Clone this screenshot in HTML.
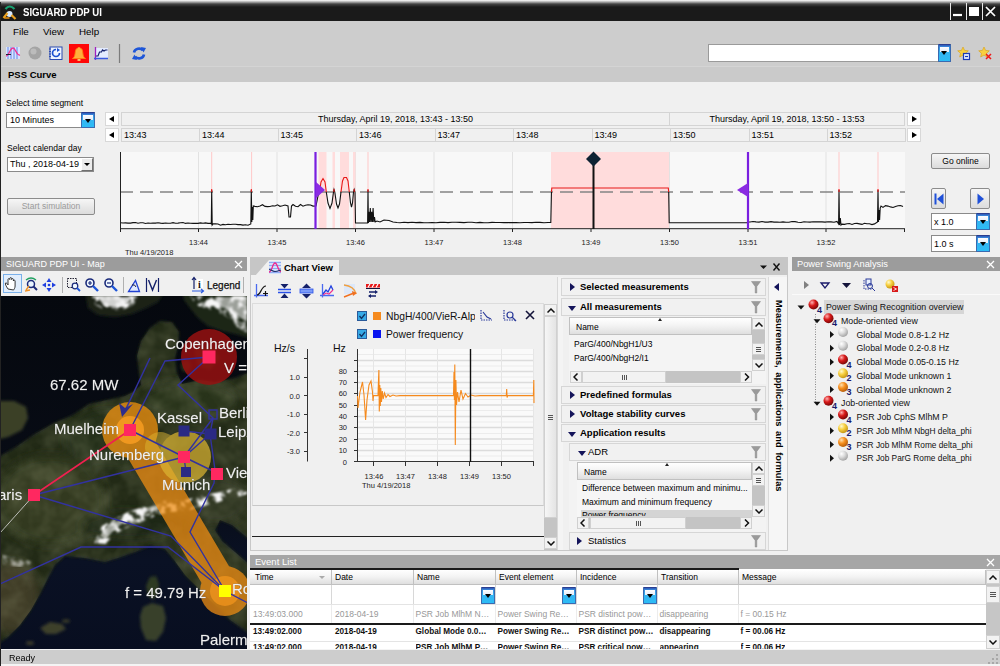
<!DOCTYPE html>
<html><head><meta charset="utf-8">
<style>
*{box-sizing:border-box;margin:0;padding:0}
html,body{width:1000px;height:666px;overflow:hidden;background:#f0f0f0;font-family:"Liberation Sans",sans-serif;font-size:9px;color:#000}
.a{position:absolute}
#titlebar{left:0;top:0;width:1000px;height:21px;background:linear-gradient(#fff 0,#aaa 2px,#444 4px,#1a1a1a 7px,#1a1a1a 100%)}
#title{left:23px;top:5.5px;color:#fff;font-weight:bold;font-size:10.5px;transform:scaleX(0.915);transform-origin:0 0;white-space:nowrap}
#menubar{left:0;top:21px;width:1000px;height:45px;background:#cdcdcd}
.menu{top:26px;font-size:9.8px}
#psshead{left:0;top:66px;width:1000px;height:16px;background:#cacaca;border-top:1px solid #d4d4d4}
#psshead span{position:absolute;left:8px;top:2px;font-weight:bold;font-size:9.5px}
#pss{left:0;top:82px;width:1000px;height:175px;background:#f0f0f0}
.lbl{font-size:8.5px}
.combo{background:#fff;border:1px solid #8a8a8a;font-size:9px}
.ddbtn{background:linear-gradient(#2f55b5 0,#3a8ee0 2px,#35b4f2 45%,#2cbcf6 100%);border:1px solid #3a6ab0;border-top-color:#2a3e90;border-radius:1px}
.ddbtn:before{content:"";position:absolute;left:1px;right:1px;top:2px;height:5px;background:linear-gradient(#fdfdff,#e4ecfa)}
.ddbtn:after{content:"";position:absolute;left:50%;margin-left:-3.5px;top:6px;border:3.5px solid transparent;border-top:4px solid #000;border-bottom:0;width:0;height:0}
.navb{background:#fff;border:1px solid #d8d8d8;width:14px;height:14px}
.bar{background:#f0f0f0;border:1px solid #d4d4d4;height:14px}
.btn{border:1px solid #8c8c8c;border-radius:2px;background:linear-gradient(#f6f6f6,#dcdcdc);font-size:8.5px;text-align:center}
.sep{background:#a0a0a0}
.ptitle{background:#9c9c9c;color:#fff;font-size:9.5px}
.tl,.tr{position:absolute;left:3px;top:3px;width:0;height:0;border:3.5px solid transparent}.tl{border-right:5px solid #000;border-left:0}.tr{border-left:5px solid #000;border-right:0;left:4px}

.tabstrip{background:#c6c6c6}
.acc{background:#f1f1f1;border:1px solid #d6d6d6;font-weight:bold;font-size:9.5px}
.acc span{position:absolute;top:2px}
.tri-r{position:absolute;width:0;height:0;border:4px solid transparent;border-left:5px solid #14145a;border-right:0}
.tri-d{position:absolute;width:0;height:0;border:4px solid transparent;border-top:5px solid #14145a;border-bottom:0}
.fun{position:absolute}
.th{background:linear-gradient(#ffffff,#f4f4f4 45%,#dfdfdf);border:1px solid #c0c0c0;font-size:8.5px}
.sb{background:#c4c4c4}
.sbb{position:absolute;background:#f2f2f2;border:1px solid #d0d0d0}
.row{font-size:8.5px;white-space:nowrap}
.tree{font-size:8.8px;white-space:nowrap;color:#111}
</style></head><body>
<div class="a" id="titlebar"></div>
<div class="a" id="title">SIGUARD PDP UI</div>
<div class="a" id="menubar"></div>
<div class="a menu" style="left:13px">File</div>
<div class="a menu" style="left:43px">View</div>
<div class="a menu" style="left:79px">Help</div>
<div class="a" id="psshead"><span>PSS Curve</span></div>
<div class="a" id="pss"></div>
<div class="a lbl" style="left:6px;top:98px">Select time segment</div>
<div class="a combo" style="left:6px;top:112px;width:89px;height:16px"><span class="a" style="left:3px;top:2px">10 Minutes</span></div>
<div class="a ddbtn" style="left:81px;top:112px;width:14px;height:16px"></div>
<div class="a lbl" style="left:7px;top:143px">Select calendar day</div>
<div class="a combo" style="left:7px;top:157px;width:87px;height:15px"><span class="a" style="left:2px;top:1px">Thu , 2018-04-19</span></div>
<div class="a" style="left:81px;top:158px;width:12px;height:13px;background:#ececec;border:1px solid #fff;border-right-color:#707070;border-bottom-color:#707070"><i class="a" style="left:2px;top:4px;width:0;height:0;border:3px solid transparent;border-top:3px solid #000;border-bottom:0"></i></div>
<div class="a btn" style="left:7px;top:198px;width:88px;height:17px;color:#9a9a9a;line-height:15px">Start simulation</div>


<!-- TOP TOOLBAR -->
<svg class="a" style="left:0;top:0" width="1000" height="66" viewBox="0 0 1000 66">
<g transform="translate(1.5,1)"><circle cx="8" cy="13" r="3" fill="#d8eaff"/><path d="M4 8q4-5 9 0" stroke="#18a070" stroke-width="2.2" fill="none"/><path d="M6 12L2 17M10 14l4 4" stroke="#e8a020" stroke-width="2.2"/><path d="M3 17h5" stroke="#e89010" stroke-width="1.5"/></g>
<g stroke="#fff" fill="none"><path d="M950.5 3V20M966.5 3V20M982.5 3V20" stroke="#e8e8e8" stroke-width="1"/><path d="M953 15h9" stroke-width="2.2"/><rect x="969.5" y="7.5" width="9" height="8" fill="#fff"/><path d="M986 7l9 9M995 7l-9 9" stroke-width="1.7"/></g>
<g><rect x="6" y="47" width="14" height="12" fill="#d6e4ff"/><path d="M8 47v12M11 47v12M14 47v12M17 47v12" stroke="#5a7ce8" stroke-width="0.9"/><path d="M6 56c3 0 4-8 7-8s3 8 7 7" stroke="#f03090" stroke-width="1.3" fill="none"/><path d="M6 54.5h5" stroke="#223" stroke-width="1"/></g>
<circle cx="35" cy="53" r="6.5" fill="#a4a4a4"/><circle cx="33.5" cy="51.5" r="3" fill="#bcbcbc"/>
<g><rect x="50" y="47" width="12" height="12.5" fill="#eef4ff" stroke="#2a4ab0" stroke-width="1"/><path d="M49 49h2M49 51.5h2M49 54h2M49 56.5h2" stroke="#2a4ab0" stroke-width="1"/><path d="M59.5 53a3.5 3.5 0 1 1-3.5-3.5" stroke="#1a50d0" stroke-width="1.7" fill="none"/><path d="M57 48l3 2l-3 2Z" fill="#1a50d0"/></g>
<rect x="69" y="44" width="20" height="19" fill="#ff0808"/><path d="M72.5 58.5C76 57 74.5 50.5 76.5 48.8C77.8 47.6 80.2 47.6 81.5 48.8C83.5 50.5 82 57 85.5 58.5Z" fill="#ffae3c" stroke="#ff8210" stroke-width="0.9"/><circle cx="79" cy="48.5" r="1.2" fill="#ffb040"/><ellipse cx="79" cy="60" rx="1.8" ry="1" fill="#ffc870"/>
<g><rect x="96" y="48" width="12" height="10" fill="#e4ecff"/><path d="M95.5 47v13" stroke="#a020c0" stroke-width="1.3"/><path d="M94 58.5h14" stroke="#3a5ae0" stroke-width="1.5"/><path d="M96 56h2l1.5-4h2l1-2l1.5 1l1.5-1h2" stroke="#14206a" stroke-width="1.2" fill="none"/></g>
<path d="M119.5 44v19" stroke="#7c7c7c" stroke-width="1.2"/>
<g fill="none" stroke="#1e56d8" stroke-width="2.6"><path d="M134 52.5a5 4.5 0 0 1 9-2"/><path d="M144 54.5a5 4.5 0 0 1-9 2"/></g><path d="M141 47l5 1l-2.5 4.5Z" fill="#1e56d8"/><path d="M137 60l-5-1l2.5-4.5Z" fill="#1e56d8"/>
<g><path d="M963 47l1.6 3.4l3.7 0.4l-2.8 2.5l0.8 3.7l-3.3-1.9l-3.3 1.9l0.8-3.7l-2.8-2.5l3.7-0.4Z" fill="#f8d040" stroke="#d8a010" stroke-width="0.6"/><rect x="963.5" y="53.5" width="6" height="6" fill="#e8f0ff" stroke="#1a3ab8" stroke-width="1.2"/><path d="M965 56.5h3" stroke="#1a3ab8" stroke-width="1.2"/></g>
<g><path d="M984 47l1.6 3.4l3.7 0.4l-2.8 2.5l0.8 3.7l-3.3-1.9l-3.3 1.9l0.8-3.7l-2.8-2.5l3.7-0.4Z" fill="#f8d040" stroke="#d8a010" stroke-width="0.6"/><path d="M986 54l5 5M991 54l-5 5" stroke="#f01818" stroke-width="1.5"/></g>
</svg>
<div class="a combo" style="left:708px;top:44px;width:243px;height:18px;border-color:#9a9a9a"></div>
<div class="a ddbtn" style="left:938px;top:44px;width:13px;height:18px"></div>
<!-- PSS timeline -->
<div class="a navb" style="left:105px;top:112px"><i class="tl"></i></div>
<div class="a navb" style="left:105px;top:128px"><i class="tl"></i></div>
<div class="a navb" style="left:907px;top:112px"><i class="tr"></i></div>
<div class="a navb" style="left:907px;top:128px"><i class="tr"></i></div>
<div class="a bar" style="left:121px;top:112px;width:549px;text-align:center;line-height:12px;font-size:9px;padding-left:0">Thursday, April 19, 2018, 13:43 - 13:50</div>
<div class="a bar" style="left:669px;top:112px;width:236px;text-align:center;line-height:12px;font-size:9px">Thursday, April 19, 2018, 13:50 - 13:53</div>
<div class="a bar" style="left:121px;top:128px;width:79px;line-height:12px;font-size:9px;padding-left:2px">13:43</div>
<div class="a bar" style="left:199px;top:128px;width:79.5px;line-height:12px;font-size:9px;padding-left:2px">13:44</div>
<div class="a bar" style="left:277.5px;top:128px;width:79.5px;line-height:12px;font-size:9px;padding-left:2px">13:45</div>
<div class="a bar" style="left:356px;top:128px;width:79.5px;line-height:12px;font-size:9px;padding-left:2px">13:46</div>
<div class="a bar" style="left:434.5px;top:128px;width:79.5px;line-height:12px;font-size:9px;padding-left:2px">13:47</div>
<div class="a bar" style="left:513px;top:128px;width:79.5px;line-height:12px;font-size:9px;padding-left:2px">13:48</div>
<div class="a bar" style="left:591.5px;top:128px;width:79.5px;line-height:12px;font-size:9px;padding-left:2px">13:49</div>
<div class="a bar" style="left:670px;top:128px;width:79.5px;line-height:12px;font-size:9px;padding-left:2px">13:50</div>
<div class="a bar" style="left:748.5px;top:128px;width:79px;line-height:12px;font-size:9px;padding-left:2px">13:51</div>
<div class="a bar" style="left:826.5px;top:128px;width:79.5px;line-height:12px;font-size:9px;padding-left:2px">13:52</div>
<svg class="a" style="left:100px;top:145px" width="820" height="115" viewBox="100 145 820 115" font-family="Liberation Sans, sans-serif">
<rect x="120" y="152" width="785" height="77" fill="#f8f8f8"/>
<g stroke="#e2e2e2" stroke-width="1"><path d="M198.5 152V229M277 152V229M355.5 152V229M434 152V229M512.5 152V229M591 152V229M669.5 152V229M748 152V229M826 152V229"/></g>
<g fill="#ffdcdc"><rect x="318.5" y="152" width="8" height="77"/><rect x="332.5" y="152" width="2.5" height="77"/><rect x="340" y="152" width="9" height="77"/><rect x="353" y="152" width="2.5" height="77"/><rect x="551" y="152" width="118" height="77"/></g>
<g stroke="#ffc8c8" stroke-width="1"><path d="M211.7 152V192M251.6 152V192M368 152V192M839 152V192M878 152V192"/></g>
<path d="M120 192H905" stroke="#848484" stroke-width="1.3" stroke-dasharray="13 7" fill="none"/>
<path id="sig" d="M120.5 222.7L123.0 223.0L125.5 222.9L128.0 223.1L130.5 223.1L133.0 222.6L135.5 222.5L138.0 223.3L140.5 222.8L143.0 222.7L145.5 223.5L148.0 223.0L150.5 223.3L153.0 223.0L155.5 223.1L158.0 222.7L160.5 223.1L163.0 223.4L165.5 223.0L168.0 223.2L170.5 223.2L173.0 222.6L175.5 223.3L178.0 223.1L180.5 222.8L183.0 222.5L185.5 223.4L188.0 223.0L190.5 223.2L193.0 223.4L195.5 223.2L198.0 223.4L200.5 222.9L203.0 223.3L205.5 222.9L208.0 223.4L210.5 223.4L211.3 224.0L211.7 190.0L212.2 225.0L213.0 223.9L215.5 223.9L218.0 224.0L220.5 225.2L223.0 224.4L225.5 224.7L228.0 224.2L230.5 224.5L233.0 224.3L235.5 224.3L238.0 224.6L240.5 224.6L243.0 225.1L245.5 224.8L248.0 225.2L250.8 224.0L251.3 190.0L251.8 222.0L252.3 207.0L252.8 220.0L253.3 206.0L255.0 206.4L257.5 206.7L260.0 205.9L262.5 204.7L265.0 206.4L267.5 206.6L270.0 206.5L272.5 205.7L275.0 206.0L277.5 204.8L280.0 206.3L282.5 205.7L285.0 205.0L288.0 206.0L289.0 217.0L290.5 217.0L291.5 206.0L293.0 204.5L295.5 206.3L298.0 206.7L300.5 204.5L303.0 206.2L305.5 205.3L308.0 204.7L310.5 205.0L313.0 206.1L316.0 206.0L318.0 196.0L319.5 192.0 M326.3 192.0L328.0 203.0L330.0 208.5L332.0 203.0L333.5 192.0L334.0 189.5L334.8 192.0L336.5 204.0L338.0 208.0L339.5 204.0L341.0 192.0 M349.3 192.0L350.5 203.0L351.5 207.0L352.5 203.0L353.5 192.0L354.2 189.5L355.0 192.0L355.5 223.0L367.6 223.0L368.0 190.0L368.4 223.0L368.9 211.8L369.6 222.0L370.3 208.0L371.0 222.0L371.7 211.8L372.4 222.0L373.1 208.0L373.8 222.0L374.5 217.0L375.2 222.0L377.0 221.0L380.0 222.0L384.0 220.0L389.0 220.5L393.0 222.0L397.0 222.5L400.0 222.7L404.0 222.2L408.0 222.6L412.0 222.2L416.0 222.6L420.0 222.4L424.0 222.7L428.0 222.8L432.0 222.5L436.0 222.8L440.0 222.4L444.0 222.2L448.0 222.6L452.0 222.2L456.0 222.3L460.0 222.4L464.0 222.6L468.0 222.3L472.0 222.2L476.0 222.7L480.0 222.4L484.0 222.8L488.0 222.7L492.0 222.4L496.0 222.5L500.0 222.5L504.0 222.6L508.0 222.6L512.0 222.5L516.0 222.6L520.0 222.8L524.0 222.5L528.0 222.5L532.0 222.6L536.0 222.3L540.0 222.4L544.0 222.8L548.0 222.5L550.8 222.5L551.5 190.0 M668.7 192.0L669.2 222.8L747.0 222.8L748.5 222.0L750.0 222.0L753.0 221.5L756.0 221.9L759.0 222.1L762.0 221.5L765.0 222.1L768.0 222.1L771.0 221.6L774.0 222.1L777.0 222.0L780.0 222.2L783.0 221.9L786.0 222.2L789.0 222.2L792.0 221.5L795.0 221.6L798.0 222.2L801.0 222.5L804.0 221.8L807.0 222.0L810.0 222.1L813.0 221.8L816.0 221.9L819.0 221.8L822.0 221.9L825.0 222.1L828.0 221.8L831.0 221.9L834.0 222.3L837.0 221.5L838.6 224.0L839.0 190.0L839.5 225.0L840.3 218.0L841.0 225.0L842.0 224.1L844.5 224.4L847.0 223.7L849.5 223.5L852.0 224.5L854.5 223.5L857.0 223.4L859.5 223.9L862.0 224.4L864.5 223.3L867.0 223.7L869.5 223.7L872.0 224.6L874.5 223.9L877.5 222.0L878.0 190.0L878.5 222.0L879.0 210.0L879.6 220.0L880.2 208.0L881.0 206.0L883.0 207.4L885.5 205.6L888.0 206.1L890.5 206.9L893.0 207.5L895.5 206.4L898.0 205.8L900.5 205.5L903.0 206.6" stroke="#111" stroke-width="1.1" fill="none"/>
<path id="sigr" d="M319.5 192.0L321.0 182.0L323.0 178.5L325.0 182.0L326.3 192.0 M341.0 192.0L342.5 181.0L344.0 177.5L346.5 177.5L348.0 181.0L349.3 192.0 M551.5 192.0L551.8 188.0L668.3 188.0L668.7 192.0 M211.7 192V189 M251.3 192V189 M334.0 192V189 M354.2 192V189 M368.0 192V189 M839.0 192V189 M878.0 192V189" stroke="#e81818" stroke-width="1.1" fill="none"/>
<path d="M120.5 152V232M120 228.7H905M198.5 229v3M277 229v3M355.5 229v3M434 229v3M512.5 229v3M591 229v3M669.5 229v3M748 229v3M826 229v3M904.5 229v3" stroke="#222" stroke-width="1" fill="none"/>
<path d="M315.5 152V229" stroke="#7a1fe0" stroke-width="2.2"/><path d="M316 182L325 190L316 198Z" fill="#8a2be2"/>
<path d="M748 152V229" stroke="#7a1fe0" stroke-width="2.2"/><path d="M748 183L737 190L748 197Z" fill="#8a2be2"/>
<path d="M593.5 158V229" stroke="#111" stroke-width="2"/><path d="M593.5 151.5L601 159L593.5 166.5L586 159Z" fill="#0e2233"/>
<g font-size="7.5" fill="#222" text-anchor="middle"><text x="198.5" y="245">13:44</text><text x="277" y="245">13:45</text><text x="355.5" y="245">13:46</text><text x="434" y="245">13:47</text><text x="512.5" y="245">13:48</text><text x="591" y="245">13:49</text><text x="669.5" y="245">13:50</text><text x="748" y="245">13:51</text><text x="826" y="245">13:52</text></g>
<text x="125" y="255" font-size="7.5" fill="#222">Thu 4/19/2018</text>
</svg>
<div class="a btn" style="left:931px;top:153px;width:59px;height:16px;line-height:14px">Go online</div>
<div class="a btn" style="left:931px;top:188px;width:15px;height:21px"><svg class="a" style="left:2px;top:4px" width="10" height="12"><path d="M1.5 0.5V11.5" stroke="#1f50d8" stroke-width="2"/><path d="M9.5 0.5L3 6L9.5 11.5Z" fill="#1f50d8"/></svg></div>
<div class="a btn" style="left:970px;top:188px;width:20px;height:21px"><svg class="a" style="left:6px;top:4px" width="8" height="12"><path d="M0.5 0.5L7 6L0.5 11.5Z" fill="#1f50d8"/></svg></div>
<div class="a combo" style="left:931px;top:213px;width:59px;height:17px"><span class="a" style="left:2px;top:3px">x 1.0</span></div>
<div class="a ddbtn" style="left:976px;top:213px;width:14px;height:17px"></div>
<div class="a combo" style="left:931px;top:235px;width:59px;height:17px"><span class="a" style="left:2px;top:3px">1.0 s</span></div>
<div class="a ddbtn" style="left:976px;top:235px;width:14px;height:17px"></div>


<!-- MAP PANEL -->
<div class="a ptitle" style="left:1px;top:257px;width:246px;height:14px"><span class="a" style="left:5px;top:2px;font-size:9px;white-space:nowrap">SIGUARD PDP UI - Map</span><svg class="a" style="left:233px;top:3px" width="9" height="9"><path d="M1 1L8 8M8 1L1 8" stroke="#fff" stroke-width="1.3" fill="none"/></svg></div>
<div class="a" style="left:0;top:271px;width:247px;height:25px;background:#f0f0f0"></div>
<svg class="a" style="left:0;top:272px" width="247" height="24" viewBox="0 272 247 24" font-family="Liberation Sans, sans-serif">
<rect x="3.5" y="274.5" width="18" height="18" fill="#e2eefc" stroke="#7ab0ea"/>
<path d="M8 289c-2-3-3-5-2.5-6c1-0.5 2 1 2.5 2v-5.500c0-1.2 1.8-1.2 1.8 0v-1c0-1.2 1.8-1.2 1.8 0v1c0-1.2 1.8-1.2 1.8 0v1.500c0-1.2 1.7-1.2 1.7 0v5c0 2-1 3-1.5 4Z" fill="#fff" stroke="#222" stroke-width="0.9"/>
<g><circle cx="31" cy="284" r="3.5" fill="#e8f4ff" stroke="#1a2a7a" stroke-width="1.5"/><path d="M33.5 286.500l3.5 3.5" stroke="#1a2a7a" stroke-width="2"/><path d="M26 280q5-4 10 0" stroke="#20a060" stroke-width="1.3" fill="none"/><path d="M26 290l3-4M25 291l5-1" stroke="#f09020" stroke-width="1.3"/></g>
<g fill="#2040e0"><path d="M49 278l2.5 4h-5ZM49 292l2.5-4h-5ZM42 285l4-2.500v5ZM56 285l-4-2.500v5Z"/><circle cx="49" cy="285" r="1.3"/></g>
<path d="M62.5 277v16M123.5 277v16M243.5 277v16" stroke="#b0b0b0" stroke-width="1"/>
<g><rect x="67.5" y="278.5" width="9" height="9" fill="none" stroke="#223" stroke-width="1" stroke-dasharray="1.5 1"/><circle cx="75" cy="286" r="2.8" fill="#f0f8ff" stroke="#1a2a7a" stroke-width="1.2"/><path d="M77 288l3 3" stroke="#1e56d8" stroke-width="1.8"/></g>
<g><circle cx="90" cy="283" r="4" fill="#f0f8ff" stroke="#1a2a7a" stroke-width="1.6"/><path d="M88 283h4M90 281v4" stroke="#1a2a7a" stroke-width="1.2"/><path d="M93 286l5 5" stroke="#1e56d8" stroke-width="2.4"/></g>
<g><circle cx="109" cy="283" r="4" fill="#f0f8ff" stroke="#1a2a7a" stroke-width="1.6"/><path d="M107 283h4" stroke="#1a2a7a" stroke-width="1.2"/><path d="M112 286l5 5" stroke="#1e56d8" stroke-width="2.4"/></g>
<path d="M128.5 291.500h11l-4-11Z" fill="#dfe8ff" stroke="#2040d0" stroke-width="1.3"/><path d="M132 285q3-1 4 2" stroke="#223" stroke-width="1" fill="none"/>
<path d="M146.5 278v14M158.5 278v14" stroke="#14206a" stroke-width="1.2"/><path d="M148.5 280l4 10l4-10" stroke="#14206a" stroke-width="1.4" fill="none"/>
<g><path d="M194 278v11M192 280l2-2.500l2 2.5" stroke="#14206a" stroke-width="1.2" fill="none"/><path d="M192 291h11M201 289l2.5 2l-2.5 2" stroke="#2a5ae0" stroke-width="1.2" fill="none"/><rect x="197" y="279" width="6" height="9" fill="#fff"/><text x="198" y="288" font-size="10" font-weight="bold" fill="#111" font-family="Liberation Serif, serif">i</text></g>
<text x="207" y="289" font-size="10" fill="#111" stroke="#111" stroke-width="0.250">Legend</text>
</svg>
<svg class="a" style="left:1px;top:296px" width="246" height="353" viewBox="1 296 246 353" font-family="Liberation Sans, sans-serif">
<defs>
<filter id="b2" x="-20%" y="-20%" width="140%" height="140%"><feGaussianBlur stdDeviation="1.6"/></filter>
<filter id="b4" x="-30%" y="-30%" width="160%" height="160%"><feGaussianBlur stdDeviation="5"/></filter>
<filter id="b1" x="-20%" y="-20%" width="140%" height="140%"><feGaussianBlur stdDeviation="0.9"/></filter>
<filter id="tex" x="0" y="0" width="100%" height="100%"><feTurbulence type="fractalNoise" baseFrequency="0.045" numOctaves="3" seed="11"/><feColorMatrix values="0 0 0 0 0.42  0 0 0 0 0.44  0 0 0 0 0.26  1.5 0 0 0 -0.45"/></filter>
<filter id="snow" x="0" y="0" width="100%" height="100%"><feTurbulence type="fractalNoise" baseFrequency="0.13" numOctaves="2" seed="5" result="n"/><feColorMatrix in="n" values="0 0 0 0 0.93  0 0 0 0 0.93  0 0 0 0 0.93  0 0 0 5 -2.1" result="m"/><feComposite in="m" in2="SourceGraphic" operator="in"/><feGaussianBlur stdDeviation="0.8"/></filter>
<linearGradient id="sea" x1="0" y1="0" x2="0" y2="1"><stop offset="0" stop-color="#05080e"/><stop offset="0.55" stop-color="#080c16"/><stop offset="0.75" stop-color="#0a1124"/><stop offset="1" stop-color="#080e20"/></linearGradient>
<clipPath id="landclip"><path d="M160 321L150 328L141 341L137 356L139 372L141 385L133 392L125 396L89 404L73 415L54 423L35 434L16 447L-5 459L-5 646L8 637L20 625L31 610L40 594L48 578L55 565L65 556L85 558L105 562L118 558L135 552L150 546L165 549L174 560L185 575L200 590L215 605L230 620L250 634L250 565L235 552L222 541L215 530L220 520L232 525L250 540L250 372L235 378L215 382L200 380L182 384L177 373L175 358L178 345L179 332L172 322Z"/></clipPath>
</defs>
<rect x="1" y="296" width="246" height="353" fill="url(#sea)"/>
<g filter="url(#b2)">
<path d="M160 321L150 328L141 341L137 356L139 372L141 385L133 392L125 396L89 404L73 415L54 423L35 434L16 447L-5 459L-5 646L8 637L20 625L31 610L40 594L48 578L55 565L65 556L85 558L105 562L118 558L135 552L150 546L165 549L174 560L185 575L200 590L215 605L230 620L250 634L250 565L235 552L222 541L215 530L220 520L232 525L250 540L250 372L235 378L215 382L200 380L182 384L177 373L175 358L178 345L179 332L172 322Z" fill="#222c17"/>
<path d="M182 290L250 290L250 338L235 334L222 331L208 326L198 318L190 308L184 300Z" fill="#1e2617"/>
<path d="M85 290L166 290L158 302L146 308L132 314L115 317L98 315L88 308Z" fill="#1b2216"/>
<path d="M-5 401L14 401L26 407L28 418L22 430L8 437L-5 440Z" fill="#3a4127"/>
<path d="M194 350L212 346L220 358L210 370L198 366Z" fill="#263019"/><ellipse cx="186" cy="366" rx="5" ry="6" fill="#263019"/>
<path d="M150 577L156 576L159 584L158 594L153 600L148 596L146 586Z" fill="#2f3a20"/><path d="M143 607L152 603L163 606L166 618L163 632L156 641L146 640L141 628L140 616Z" fill="#38412a"/>
<path d="M40 628L50 622L62 624L66 629L56 634L46 634Z" fill="#3c3f2a"/><ellipse cx="66" cy="621" rx="4" ry="1.8" fill="#3a3d28"/><ellipse cx="30" cy="643" rx="4" ry="2" fill="#3a3a2a"/>
</g>
<g clip-path="url(#landclip)">
<g filter="url(#b4)" opacity="0.85">
<ellipse cx="50" cy="500" rx="55" ry="45" fill="#363c20"/>
<ellipse cx="12" cy="598" rx="28" ry="36" fill="#453f29"/>
<ellipse cx="130" cy="525" rx="50" ry="14" fill="#1d2817"/>
<ellipse cx="190" cy="400" rx="50" ry="20" fill="#2a351c"/>
<ellipse cx="110" cy="440" rx="45" ry="30" fill="#26321a"/>
<ellipse cx="215" cy="500" rx="35" ry="25" fill="#2e3520"/>
<ellipse cx="200" cy="575" rx="25" ry="30" fill="#333722"/>
</g>
<rect x="1" y="296" width="246" height="353" filter="url(#tex)" opacity="0.28"/>
</g>
<g filter="url(#snow)" fill="#fff">
<path d="M92 296L138 296L134 305L120 311L104 310L95 305Z"/><path d="M190 296L247 296L247 333L238 328L231 320L222 314L206 310L195 304Z"/>
<path d="M94 543L102 526L116 518L128 512L140 508L153 503L168 500L185 500L200 496L215 493L232 489L247 486L247 494L230 499L215 503L200 507L186 511L170 512L158 515L146 520L136 524L124 529L114 535L106 544Z"/>
<path d="M2 555L20 558L38 563L20 567L2 564Z" opacity="0.5"/>
</g>
<g filter="url(#b1)" fill="#f0f0f0">
<path d="M98 297L132 297L128 303L116 307L104 306Z" opacity="0.85"/><path d="M215 297L247 297L247 322L238 316L228 310L218 304Z" opacity="0.6"/>
<path d="M100 536L108 525L120 520L130 515L124 522L114 530L106 539Z" opacity="0.6"/><path d="M138 511l14-5l12-3l-8 6l-12 4Z" opacity="0.5"/>
</g>
<!-- overlays -->
<circle cx="209" cy="357" r="28" fill="#961010" opacity="0.85"/>
<g opacity="0.74"><path d="M130 430L225 591" stroke="#f08e14" stroke-width="32" stroke-linecap="butt"/><circle cx="130" cy="430" r="28" fill="#f4940f"/><circle cx="225" cy="591" r="25" fill="#f08e14"/></g>
<g opacity="0.72"><circle cx="185" cy="457" r="26" fill="#dcb432"/><path d="M160 447L185 457" stroke="#dcb432" stroke-width="30" stroke-linecap="round" opacity="0.7"/></g>
<circle cx="130" cy="430" r="14" fill="#ffa224" opacity="0.75"/><circle cx="225" cy="591" r="15" fill="#ff9c20" opacity="0.6"/>
<g stroke="#3232a0" stroke-width="1.4" fill="none">
<path d="M209 357L165 361L130 430"/><path d="M209 357L178 385L213 418L210 434L215 470L214 483L190 532L225 591"/>
<path d="M130 430L184 457L217 473"/><path d="M34 495L184 457"/><path d="M34 495L171 536L225 591"/><path d="M0 584L81 547L168 547L225 591L250 604"/>
<path d="M184 457L210 434L184 431"/><path d="M184 457L186 472"/><path d="M184 457L213 418"/>
<rect x="209" y="410" width="8" height="9"/>
<path d="M150 358L124 413" stroke-width="1.5"/>
</g>
<path d="M122 417L119 403L125 408L133 404Z" fill="#2e2e8c"/>
<path d="M34 495L130 430" stroke="#f02050" stroke-width="1.6"/><path d="M34 495L0 533" stroke="#ddd" stroke-width="0.8"/>
<g fill="#ff2860"><rect x="202.5" y="350.5" width="13" height="13"/><rect x="124" y="424" width="12" height="12"/><rect x="178" y="451" width="12" height="12"/><rect x="211" y="468" width="12" height="12"/><rect x="28" y="489" width="12" height="12"/></g>
<g fill="#2a2a84"><rect x="178.5" y="425.5" width="11" height="11"/><rect x="204.5" y="428.5" width="12" height="11"/><rect x="181" y="467" width="10" height="10"/></g>
<rect x="219" y="585" width="12" height="12" fill="#ffff00"/>
<g fill="#f0f0f0" font-size="15" stroke="#888" stroke-width="0.3" paint-order="stroke">
<text x="165" y="348.5">Copenhagen</text><text x="224" y="373">V =</text><text x="50" y="390">67.62 MW</text><text x="54" y="433.5">Muelheim</text><text x="157" y="423">Kassel</text><text x="219" y="417.5">Berlin</text><text x="218" y="437">Leipzig</text><text x="89" y="459.5">Nuremberg</text><text x="162" y="490">Munich</text><text x="226" y="477.5">Vienna</text><text x="-12" y="499.5">Paris</text><text x="125" y="597.5">f = 49.79 Hz</text><text x="232" y="593.5">Rome</text><text x="200" y="645">Palermo</text>
</g>
</svg>
<div class="a" style="left:0;top:2px;width:1px;height:664px;background:#222"></div>


<!-- CHART PANEL -->
<div class="a tabstrip" style="left:250px;top:257px;width:538px;height:18px"></div>
<div class="a" style="left:250px;top:275px;width:538px;height:276px;background:#f0f0f0;border:1px solid #c8c8c8;border-top:0"></div>
<div class="a" style="left:255px;top:260px;width:84px;height:16px;background:#f0f0f0;clip-path:polygon(0 100%,14px 0,100% 0,100% 100%)"></div>
<svg class="a" style="left:268px;top:260px" width="14" height="15" viewBox="0 0 14 15"><rect x="1" y="1" width="12" height="13" fill="#d4e2fc"/><path d="M1 2.5h12M1 5.5h12M1 8.5h12M1 12.5h12" stroke="#7c9cf0" stroke-width="0.8"/><path d="M1 12c3 0 3.5-9 6-9s3 8.5 6 8.5" stroke="#f0288c" stroke-width="1.3" fill="none"/><path d="M1 9.5c2 0 3 2 6 2s4-1 6-1.5" stroke="#1a2a6a" stroke-width="1.1" fill="none"/></svg>
<div class="a" style="left:284px;top:262px;font-weight:bold;font-size:9.5px">Chart View</div>
<svg class="a" style="left:758px;top:262px" width="26" height="10"><path d="M2 3.5H9L5.5 7Z" fill="#111"/><path d="M15.5 1.5L21.5 8.5M21.5 1.5L15.5 8.5" stroke="#111" stroke-width="1.4" fill="none"/></svg>

<svg class="a" style="left:252px;top:280px" width="140" height="22" viewBox="252 280 140 22">
<g><path d="M256.5 284v13.500M254 295.500h14" stroke="#4a6af0" stroke-width="1.3" fill="none"/><path d="M257 295c4 0 4-9 9-9" stroke="#111" stroke-width="1.2" fill="none"/><path d="M263 293.500h5M265.5 291v5" stroke="#111" stroke-width="1.2"/></g>
<g><path d="M278 289.500h13M278 292.500h13" stroke="#2a50e8" stroke-width="1.3"/><path d="M280.5 284h8l-4 4.500ZM280.5 298h8l-4-4.500Z" fill="#14206a"/></g>
<g><rect x="300" y="289" width="13" height="4" fill="#7a9af8" stroke="#2a50e8" stroke-width="0.8"/><path d="M302 288h9l-4.5-4.500ZM302 294h9l-4.5 4.500Z" fill="#14206a"/></g>
<g><path d="M322.5 284v13.500M320 295.500h14" stroke="#4a6af0" stroke-width="1.3" fill="none"/><path d="M323 294l3-4l2 2l3-6l2 4" stroke="#2040e0" stroke-width="1.3" fill="none"/><path d="M323 295l3-2l3 1l4-4" stroke="#f03090" stroke-width="1.1" fill="none"/></g>
<g><rect x="344" y="284" width="11" height="10" fill="#dce8fa"/><path d="M344 285q10 1 12 9" stroke="#f0a040" stroke-width="1.4" fill="none"/><path d="M344 297l10-4" stroke="#f07020" stroke-width="1.5"/><path d="M352 291l5 2l-4 3Z" fill="#f07020"/></g>
<g><rect x="366" y="284" width="14" height="3.5" fill="#e81818"/><path d="M368 287.500l2-3.500M372 287.500l2-3.500M376 287.500l2-3.5" stroke="#fff" stroke-width="1.2"/><path d="M366 288.500h14" stroke="#14143a" stroke-width="1"/><path d="M369 292h7M369 296h7" stroke="#14206a" stroke-width="1.3"/><path d="M375 290l3 2l-3 2ZM371 294l-3 2l3 2Z" fill="#14206a"/></g>
</svg>
<div class="a" style="left:252px;top:303px;width:292px;height:203px;border:1px solid #dcdcdc;border-bottom:1px solid #c8c8c8;background:#f0f0f0"></div>
<div class="a" style="left:252px;top:536px;width:292px;height:1px;background:#222"></div>
<div class="a sb" style="left:544px;top:304px;width:13px;height:246px"></div>
<div class="a sbb" style="left:544px;top:304px;width:13px;height:12px"><svg class="a" style="left:2px;top:3px" width="8" height="5"><path d="M0.5 4.5L4 1L7.5 4.5" stroke="#111" stroke-width="1.5" fill="none"/></svg></div>
<div class="a sbb" style="left:544px;top:316px;width:13px;height:202px;background:linear-gradient(90deg,#f6f6f6,#e4e4e4)"><i class="a" style="left:3px;top:98px;width:5px;height:5px;background:repeating-linear-gradient(#555 0,#555 1px,transparent 1px,transparent 2px)"></i></div>
<div class="a sbb" style="left:544px;top:537px;width:13px;height:12px"><svg class="a" style="left:2px;top:3px" width="8" height="5"><path d="M0.5 0.5L4 4L7.5 0.5" stroke="#111" stroke-width="1.5" fill="none"/></svg></div>
<div class="a" style="left:557px;top:277px;width:6px;height:273px;background:#f4f4f4;border-left:1px solid #d8d8d8"></div>
<svg class="a" style="left:252px;top:304px" width="292" height="200" viewBox="252 304 292 200" font-family="Liberation Sans, sans-serif">
<rect x="357" y="349" width="177" height="113" fill="#fafafa"/>
<g><path d="M357 354.5H534M357 366H534M357 377H534M357 388H534M357 399.5H534M357 410.5H534M357 422H534M357 433.5H534M357 444.5H534M357 456H534" stroke="#ececec" stroke-width="1"/><path d="M357 360.5H534M357 371.5H534M357 382.5H534M357 393.5H534M357 405H534M357 416.5H534M357 427.5H534M357 439H534M357 450.5H534" stroke="#dcdcdc" stroke-width="1.6"/><path d="M373.5 349V462M405.5 349V462M437.5 349V462M501.5 349V462M533.5 349V462" stroke="#e6e6e6" stroke-width="1"/></g>
<path d="M307.5 349V461.5M304 358.5h3M304 377.5h3M304 395.5h3M304 414.5h3M304 432.5h3M304 451.5h3M357.5 349V462M354 360.5h3M354 371.5h3M354 382.5h3M354 393.5h3M354 405.5h3M354 416.5h3M354 427.5h3M354 439.5h3M354 450.5h3M354 461.5H534M373.5 462v4M405.5 462v4M437.5 462v4M469.5 462v4M501.5 462v4M533.5 462v4" stroke="#333" stroke-width="1" fill="none"/>
<path id="osig" d="M357.5 396.0L358.0 408.0L360.0 392.0L362.5 382.0L364.0 395.0L365.6 420.0L367.0 400.0L369.0 385.0L371.0 381.0L372.5 392.0L373.0 401.0L373.5 395.6L378.0 395.6L378.5 380.0L378.9 370.0L379.3 411.6L379.8 385.0L380.3 406.0L380.8 388.0L381.5 402.0L382.3 391.0L383.2 399.0L384.5 393.0L386.0 397.5L388.0 394.5L390.0 396.5L393.0 395.0L396.0 396.0L400.0 395.6L453.5 395.6L454.0 372.0L454.4 400.0L454.8 364.5L455.3 445.0L455.9 380.0L456.5 405.0L457.5 392.0L459.0 402.0L461.0 390.0L463.0 399.0L465.5 393.5L468.0 397.0L471.0 395.0L475.0 396.0L480.0 395.6L506.3 395.6L506.7 389.0L507.1 397.5L507.6 395.6L533.4 395.6L533.8 380.0L534.0 403.0" stroke="#f58a1e" stroke-width="1.1" fill="none"/>
<path d="M470.5 349V462" stroke="#111" stroke-width="1.4"/>
<g font-size="7.5" fill="#222" text-anchor="end"><text x="300" y="380">1.0</text><text x="300" y="398.5">0.0</text><text x="300" y="417">-1.0</text><text x="300" y="435.5">-2.0</text><text x="300" y="454">-3.0</text>
<text x="347" y="374">80</text><text x="347" y="385">70</text><text x="347" y="396">60</text><text x="347" y="408">50</text><text x="347" y="419">40</text><text x="347" y="430">30</text><text x="347" y="442">20</text><text x="347" y="453">10</text><text x="347" y="464.5">0</text></g>
<g font-size="7.5" fill="#222" text-anchor="middle"><text x="374" y="479">13:46</text><text x="405.5" y="479">13:47</text><text x="437.5" y="479">13:48</text><text x="469.5" y="479">13:49</text><text x="501.5" y="479">13:50</text></g>
<text x="362" y="488" font-size="7.5" fill="#222">Thu 4/19/2018</text>
<text x="274" y="352" font-size="10.5" fill="#111">Hz/s</text><text x="333" y="352" font-size="10.5" fill="#111">Hz</text>
<g font-size="10.3" fill="#111"><text x="386" y="320">NbgH/400/VieR-Alp</text><text x="386" y="338">Power frequency</text></g>
<rect x="373" y="312" width="8" height="8" fill="#f58a1e"/><rect x="373" y="330" width="8" height="8" fill="#0a14f0"/>
<g><rect x="357.5" y="311.5" width="9" height="9" fill="#36a9e6" stroke="#2a5a9a"/><path d="M359.5 316l2 2.5l3.5-4.5" stroke="#103060" stroke-width="1.3" fill="none"/>
<rect x="357.5" y="329.5" width="9" height="9" fill="#36a9e6" stroke="#2a5a9a"/><path d="M359.5 334l2 2.5l3.5-4.5" stroke="#103060" stroke-width="1.3" fill="none"/></g>
<rect x="475" y="305" width="66" height="21" fill="#f0f0f0"/>
<g stroke="#2a3a9a" stroke-width="1.2" fill="none"><path d="M481 310v10h11" stroke-dasharray="1.5 1"/><path d="M483 312l4 5l4 2"/><path d="M504 310v10h11" stroke-dasharray="1.5 1"/><circle cx="510" cy="315" r="3"/><path d="M512 317l4 4"/></g>
<path d="M526 311l8 8M534 311l-8 8" stroke="#14143a" stroke-width="1.6"/>
</svg>

<!-- MEASUREMENTS -->
<div class="a acc" style="left:561px;top:278px;width:205px;height:18px;"><i class="tri-r" style="left:8px;top:4px"></i><span style="left:18px">Selected measurements</span><svg class="fun" style="right:4px;top:2px" width="10" height="13"><path d="M0.5 0.5H9.5L5.8 5.5V12H4.2V5.5Z" fill="#9a9a9a" stroke="#8a8a8a" stroke-width="0.5"/></svg></div>
<div class="a acc" style="left:561px;top:298px;width:205px;height:18px;"><i class="tri-d" style="left:6px;top:7px"></i><span style="left:18px">All measurements</span><svg class="fun" style="right:4px;top:2px" width="10" height="13"><path d="M0.5 0.5H9.5L5.8 5.5V12H4.2V5.5Z" fill="#9a9a9a" stroke="#8a8a8a" stroke-width="0.5"/></svg></div>
<div class="a" style="left:569px;top:317px;width:197px;height:67px;background:#f4f4f4"></div>
<div class="a th" style="left:569px;top:317px;width:183px;height:18px"><span class="a" style="left:6px;top:4px">Name</span><i class="a" style="left:88px;top:0px;width:0;height:0;border:2px solid transparent;border-bottom:3px solid #222;border-top:0"></i></div>
<div class="a row" style="left:574px;top:339px">ParG/400/NbgH1/U3</div>
<div class="a row" style="left:574px;top:353px">ParG/400/NbgH2/I1</div>
<div class="a sb" style="left:752px;top:318px;width:13px;height:53px"></div>
<div class="a sbb" style="left:752px;top:318px;width:13px;height:12px"><svg class="a" style="left:2px;top:3px" width="8" height="5"><path d="M0.5 4.5L4 1L7.5 4.5" stroke="#111" stroke-width="1.5" fill="none"/></svg></div>
<div class="a sbb" style="left:752px;top:359px;width:13px;height:12px"><svg class="a" style="left:2px;top:3px" width="8" height="5"><path d="M0.5 0.5L4 4L7.5 0.5" stroke="#111" stroke-width="1.5" fill="none"/></svg></div>
<div class="a sbb" style="left:752px;top:343px;width:13px;height:12px"><i class="a" style="left:3px;top:3px;width:5px;height:5px;background:repeating-linear-gradient(#555 0,#555 1px,transparent 1px,transparent 2px)"></i></div>
<div class="a sb" style="left:570px;top:371px;width:182px;height:12px"></div>
<div class="a sbb" style="left:570px;top:371px;width:12px;height:12px"><svg class="a" style="left:2px;top:1px" width="6" height="8"><path d="M4.5 0.5L1 4L4.5 7.5" stroke="#111" stroke-width="1.5" fill="none"/></svg></div>
<div class="a sbb" style="left:740px;top:371px;width:12px;height:12px"><svg class="a" style="left:3px;top:1px" width="6" height="8"><path d="M1 0.5L4.5 4L1 7.5" stroke="#111" stroke-width="1.5" fill="none"/></svg></div>
<div class="a sbb" style="left:582px;top:371px;width:84px;height:12px"><i class="a" style="left:39px;top:3px;width:6px;height:5px;background:repeating-linear-gradient(90deg,#555 0,#555 1px,transparent 1px,transparent 2px)"></i></div>
<div class="a acc" style="left:561px;top:386px;width:205px;height:18px;"><i class="tri-r" style="left:8px;top:4px"></i><span style="left:18px">Predefined formulas</span><svg class="fun" style="right:4px;top:2px" width="10" height="13"><path d="M0.5 0.5H9.5L5.8 5.5V12H4.2V5.5Z" fill="#9a9a9a" stroke="#8a8a8a" stroke-width="0.5"/></svg></div>
<div class="a acc" style="left:561px;top:405px;width:205px;height:18px;"><i class="tri-r" style="left:8px;top:4px"></i><span style="left:18px">Voltage stability curves</span><svg class="fun" style="right:4px;top:2px" width="10" height="13"><path d="M0.5 0.5H9.5L5.8 5.5V12H4.2V5.5Z" fill="#9a9a9a" stroke="#8a8a8a" stroke-width="0.5"/></svg></div>
<div class="a acc" style="left:561px;top:424px;width:205px;height:18px;"><i class="tri-d" style="left:6px;top:7px"></i><span style="left:18px">Application results</span></div>
<div class="a" style="left:569px;top:442px;width:197px;height:108px;background:#f3f3f3"></div>
<div class="a acc" style="left:569px;top:443px;width:197px;height:18px;font-weight:normal;"><i class="tri-d" style="left:8px;top:7px"></i><span style="left:18px">ADR</span><svg class="fun" style="right:4px;top:2px" width="10" height="13"><path d="M0.5 0.5H9.5L5.8 5.5V12H4.2V5.5Z" fill="#9a9a9a" stroke="#8a8a8a" stroke-width="0.5"/></svg></div>
<div class="a th" style="left:577px;top:462px;width:175px;height:18px"><span class="a" style="left:6px;top:4px">Name</span><i class="a" style="left:87px;top:0px;width:0;height:0;border:2px solid transparent;border-bottom:3px solid #222;border-top:0"></i></div>
<div class="a" style="left:577px;top:480px;width:175px;height:37px;background:#f6f6f6"></div>
<div class="a" style="left:581px;top:510px;width:171px;height:7px;background:#d4d4d4"></div>
<div class="a row" style="left:582px;top:510px;height:6px;overflow:hidden">Power frequency</div>
<div class="a row" style="left:582px;top:483px">Difference between maximum and minimu...</div>
<div class="a row" style="left:582px;top:497px">Maximum and minimum frequency</div>
<div class="a sb" style="left:752px;top:462px;width:13px;height:55px"></div>
<div class="a sbb" style="left:752px;top:462px;width:13px;height:12px"><svg class="a" style="left:2px;top:3px" width="8" height="5"><path d="M0.5 4.5L4 1L7.5 4.5" stroke="#111" stroke-width="1.5" fill="none"/></svg></div>
<div class="a sbb" style="left:752px;top:505px;width:13px;height:12px"><svg class="a" style="left:2px;top:3px" width="8" height="5"><path d="M0.5 0.5L4 4L7.5 0.5" stroke="#111" stroke-width="1.5" fill="none"/></svg></div>
<div class="a sbb" style="left:752px;top:474px;width:13px;height:12px"><i class="a" style="left:3px;top:3px;width:5px;height:5px;background:repeating-linear-gradient(#555 0,#555 1px,transparent 1px,transparent 2px)"></i></div>
<div class="a sb" style="left:577px;top:517px;width:175px;height:12px"></div>
<div class="a sbb" style="left:577px;top:517px;width:12px;height:12px"><svg class="a" style="left:2px;top:1px" width="6" height="8"><path d="M4.5 0.5L1 4L4.5 7.5" stroke="#111" stroke-width="1.5" fill="none"/></svg></div>
<div class="a sbb" style="left:740px;top:517px;width:12px;height:12px"><svg class="a" style="left:3px;top:1px" width="6" height="8"><path d="M1 0.5L4.5 4L1 7.5" stroke="#111" stroke-width="1.5" fill="none"/></svg></div>
<div class="a sbb" style="left:590px;top:517px;width:96px;height:12px"><i class="a" style="left:45px;top:3px;width:6px;height:5px;background:repeating-linear-gradient(90deg,#555 0,#555 1px,transparent 1px,transparent 2px)"></i></div>
<div class="a acc" style="left:569px;top:532px;width:197px;height:18px;font-weight:normal;"><i class="tri-r" style="left:7px;top:4px"></i><span style="left:18px">Statistics</span><svg class="fun" style="right:4px;top:2px" width="10" height="13"><path d="M0.5 0.5H9.5L5.8 5.5V12H4.2V5.5Z" fill="#9a9a9a" stroke="#8a8a8a" stroke-width="0.5"/></svg></div>
<div class="a" style="left:768px;top:277px;width:19px;height:273px;background:#f6f6f6;border-left:1px solid #dadada"></div><i class="a" style="left:774px;top:283px;width:0;height:0;border:4px solid transparent;border-right:5px solid #14145a;border-left:0"></i><div class="a" style="left:784px;top:300px;font-weight:bold;font-size:9.3px;white-space:nowrap;transform:rotate(90deg);transform-origin:0 0;letter-spacing:0;word-spacing:2px">Measurements, applications and formulas</div>
<!-- POWER SWING -->
<div class="a" style="left:792px;top:271px;width:208px;height:279px;background:#f0f0f0"></div>
<div class="a" style="left:792px;top:294px;width:208px;height:1px;background:#fafafa"></div>
<div class="a ptitle" style="left:792px;top:257px;width:208px;height:14px"><span class="a" style="left:5px;top:2px;font-size:9.3px">Power Swing Analysis</span><svg class="a" style="left:194px;top:3px" width="9" height="9"><path d="M1 1L8 8M8 1L1 8" stroke="#fff" stroke-width="1.3" fill="none"/></svg></div>
<div class="a" style="left:824px;top:300px;width:140px;height:14px;background:#d6d6d6"></div><svg class="a" style="left:792px;top:272px" width="208" height="200" viewBox="792 272 208 200" font-family="Liberation Sans, sans-serif"><defs><radialGradient id="gr" cx="0.35" cy="0.3" r="0.75"><stop offset="0" stop-color="#ffb0b0"/><stop offset="0.45" stop-color="#d81818"/><stop offset="1" stop-color="#700606"/></radialGradient><radialGradient id="gg" cx="0.35" cy="0.3" r="0.75"><stop offset="0" stop-color="#ffffff"/><stop offset="0.45" stop-color="#dcdcdc"/><stop offset="1" stop-color="#a0a0a0"/></radialGradient><radialGradient id="gy" cx="0.35" cy="0.3" r="0.75"><stop offset="0" stop-color="#fffad0"/><stop offset="0.45" stop-color="#f8d040"/><stop offset="1" stop-color="#c09010"/></radialGradient><radialGradient id="go" cx="0.35" cy="0.3" r="0.75"><stop offset="0" stop-color="#ffe0b0"/><stop offset="0.45" stop-color="#f89020"/><stop offset="1" stop-color="#b05808"/></radialGradient></defs><path d="M804 281L809 285L804 289Z" fill="#808080"/><path d="M821 283H829L825 288Z" fill="none" stroke="#1a1a6a" stroke-width="1.3"/><path d="M842 283H851L846.5 288Z" fill="#14143a"/><g stroke="#2a3a9a" fill="none" stroke-width="1"><path d="M864 280v9h8" stroke-dasharray="1.5 1"/><rect x="866" y="279" width="5" height="6" fill="#e8f0ff"/><circle cx="870" cy="286" r="2.5"/><path d="M872 288l3 3"/></g><circle cx="890" cy="284" r="4.5" fill="url(#gy)"/><rect x="892" y="286" width="6" height="6" fill="#d81818"/><path d="M893.5 287.5l3 1.5l-3 1.5" stroke="#fff" stroke-width="0.8" fill="none"/><path d="M815.5 314V404" stroke="#888" stroke-width="1" stroke-dasharray="1 1.5"/><path d="M797.5 305.5h7l-3.5 4Z" fill="#111"/><circle cx="813.5" cy="304.5" r="5" fill="url(#gr)"/><text x="817" y="312.5" font-size="9" font-weight="bold" fill="#1a1a6a">4</text><text x="826" y="310" font-size="8.8" fill="#111">Power Swing Recognition overview</text><path d="M813.5 319.25h7l-3.5 4Z" fill="#111"/><circle cx="828.5" cy="318.25" r="5" fill="url(#gr)"/><text x="832" y="326.25" font-size="9" font-weight="bold" fill="#1a1a6a">4</text><text x="841" y="323.75" font-size="8.8" fill="#111">Mode-oriented view</text><path d="M830 331v7l4 -3.5Z" fill="#111"/><circle cx="843" cy="332" r="5" fill="url(#gg)"/><text x="856.5" y="337.5" font-size="8.8" fill="#111">Global Mode 0.8-1.2 Hz</text><path d="M830 344.75v7l4 -3.5Z" fill="#111"/><circle cx="843" cy="345.75" r="5" fill="url(#gg)"/><text x="856.5" y="351.25" font-size="8.8" fill="#111">Global Mode 0.2-0.8 Hz</text><path d="M830 358.5v7l4 -3.5Z" fill="#111"/><circle cx="843" cy="359.5" r="5" fill="url(#gr)"/><text x="846.5" y="367.5" font-size="9" font-weight="bold" fill="#1a1a6a">4</text><text x="856.5" y="365" font-size="8.8" fill="#111">Global Mode 0.05-0.15 Hz</text><path d="M830 372.25v7l4 -3.5Z" fill="#111"/><circle cx="843" cy="373.25" r="5" fill="url(#gy)"/><text x="846.5" y="381.25" font-size="9" font-weight="bold" fill="#1a1a6a">2</text><text x="856.5" y="378.75" font-size="8.8" fill="#111">Global Mode unknown 1</text><path d="M830 386v7l4 -3.5Z" fill="#111"/><circle cx="843" cy="387" r="5" fill="url(#go)"/><text x="846.5" y="395" font-size="9" font-weight="bold" fill="#1a1a6a">3</text><text x="856.5" y="392.5" font-size="8.8" fill="#111">Global Mode unknown 2</text><path d="M813.5 401.75h7l-3.5 4Z" fill="#111"/><circle cx="828.5" cy="400.75" r="5" fill="url(#gr)"/><text x="832" y="408.75" font-size="9" font-weight="bold" fill="#1a1a6a">4</text><text x="841" y="406.25" font-size="8.8" fill="#111">Job-oriented view</text><path d="M830 413.5v7l4 -3.5Z" fill="#111"/><circle cx="843" cy="414.5" r="5" fill="url(#gr)"/><text x="846.5" y="422.5" font-size="9" font-weight="bold" fill="#1a1a6a">4</text><text x="856.5" y="420" font-size="8.8" fill="#111">PSR Job CphS MlhM P</text><path d="M830 427.25v7l4 -3.5Z" fill="#111"/><circle cx="843" cy="428.25" r="5" fill="url(#gy)"/><text x="846.5" y="436.25" font-size="9" font-weight="bold" fill="#1a1a6a">2</text><text x="856.5" y="433.75" font-size="8.8" fill="#111" textLength="115" lengthAdjust="spacingAndGlyphs">PSR Job MlhM NbgH delta_phi</text><path d="M830 441v7l4 -3.5Z" fill="#111"/><circle cx="843" cy="442" r="5" fill="url(#go)"/><text x="846.5" y="450" font-size="9" font-weight="bold" fill="#1a1a6a">3</text><text x="856.5" y="447.5" font-size="8.8" fill="#111" textLength="116" lengthAdjust="spacingAndGlyphs">PSR Job MlhM Rome delta_phi</text><path d="M830 454.75v7l4 -3.5Z" fill="#111"/><circle cx="843" cy="455.75" r="5" fill="url(#gg)"/><text x="856.5" y="461.25" font-size="8.8" fill="#111" textLength="115" lengthAdjust="spacingAndGlyphs">PSR Job ParG Rome delta_phi</text></svg>
<!-- EVENT LIST -->
<div class="a ptitle" style="left:250px;top:555px;width:750px;height:14px;background:#a6a6a6"><span class="a" style="left:5px;top:1px">Event List</span><svg class="a" style="left:736px;top:3px" width="9" height="9"><path d="M1 1L8 8M8 1L1 8" stroke="#fff" stroke-width="1.3" fill="none"/></svg></div>
<div class="a" style="left:250px;top:569px;width:736px;height:80px;background:#fff"></div>
<div class="a" style="left:250px;top:568px;width:489px;height:2px;background:#1a1a1a"></div>
<div class="a th" style="left:250px;top:570px;width:82px;height:15px;border-top:0;border-left:0"><span class="a" style="left:5px;top:2px">Time</span></div>
<div class="a th" style="left:332px;top:570px;width:82px;height:15px;border-top:0;border-left:0"><span class="a" style="left:3px;top:2px">Date</span></div>
<div class="a" style="left:331px;top:585px;width:1px;height:38px;background:linear-gradient(#d8d8d8 0,#d8d8d8 20px,#ececec 20px)"></div>
<div class="a th" style="left:414px;top:570px;width:82px;height:15px;border-top:0;border-left:0"><span class="a" style="left:3px;top:2px">Name</span></div>
<div class="a" style="left:413px;top:585px;width:1px;height:38px;background:linear-gradient(#d8d8d8 0,#d8d8d8 20px,#ececec 20px)"></div>
<div class="a th" style="left:496px;top:570px;width:81px;height:15px;border-top:0;border-left:0"><span class="a" style="left:3px;top:2px">Event element</span></div>
<div class="a" style="left:495px;top:585px;width:1px;height:38px;background:linear-gradient(#d8d8d8 0,#d8d8d8 20px,#ececec 20px)"></div>
<div class="a th" style="left:577px;top:570px;width:81px;height:15px;border-top:0;border-left:0"><span class="a" style="left:3px;top:2px">Incidence</span></div>
<div class="a" style="left:576px;top:585px;width:1px;height:38px;background:linear-gradient(#d8d8d8 0,#d8d8d8 20px,#ececec 20px)"></div>
<div class="a th" style="left:658px;top:570px;width:81px;height:15px;border-top:0;border-left:0"><span class="a" style="left:3px;top:2px">Transition</span></div>
<div class="a" style="left:657px;top:585px;width:1px;height:38px;background:linear-gradient(#d8d8d8 0,#d8d8d8 20px,#ececec 20px)"></div>
<div class="a th" style="left:739px;top:570px;width:247px;height:15px;border-top:0;border-left:0"><span class="a" style="left:3px;top:2px">Message</span></div>
<div class="a" style="left:738px;top:585px;width:1px;height:38px;background:linear-gradient(#d8d8d8 0,#d8d8d8 20px,#ececec 20px)"></div><i class="a" style="left:319px;top:576px;width:0;height:0;border:3px solid transparent;border-top:3px solid #aaa;border-bottom:0"></i><div class="a ddbtn" style="left:481px;top:587px;width:14px;height:17px"></div>
<div class="a ddbtn" style="left:562px;top:587px;width:14px;height:17px"></div>
<div class="a ddbtn" style="left:643px;top:587px;width:14px;height:17px"></div>
<div class="a" style="left:250px;top:604px;width:736px;height:1px;background:#e4e4e4"></div>
<div class="a row" style="left:253px;top:609px;color:#989898">13:49:03.000</div>
<div class="a row" style="left:253px;top:627px;color:#111;font-weight:bold;font-size:8.2px">13:49:02.000</div>
<div class="a row" style="left:253px;top:643px;color:#111;height:6px;overflow:hidden;font-weight:bold;font-size:8.2px">13:49:02.000</div>
<div class="a row" style="left:335px;top:609px;color:#989898">2018-04-19</div>
<div class="a row" style="left:335px;top:627px;color:#111;font-weight:bold;font-size:8.2px">2018-04-19</div>
<div class="a row" style="left:335px;top:643px;color:#111;height:6px;overflow:hidden;font-weight:bold;font-size:8.2px">2018-04-19</div>
<div class="a row" style="left:415.5px;top:609px;color:#989898">PSR Job MlhM N…</div>
<div class="a row" style="left:415.5px;top:627px;color:#111;font-weight:bold;font-size:8.2px">Global Mode 0.0…</div>
<div class="a row" style="left:415.5px;top:643px;color:#111;height:6px;overflow:hidden;font-weight:bold;font-size:8.2px">PSR Job MlhM P…</div>
<div class="a row" style="left:497.5px;top:609px;color:#989898">Power Swing Re…</div>
<div class="a row" style="left:497.5px;top:627px;color:#111;font-weight:bold;font-size:8.2px">Power Swing Re…</div>
<div class="a row" style="left:497.5px;top:643px;color:#111;height:6px;overflow:hidden;font-weight:bold;font-size:8.2px">Power Swing Re…</div>
<div class="a row" style="left:578.5px;top:609px;color:#989898">PSR distinct pow…</div>
<div class="a row" style="left:578.5px;top:627px;color:#111;font-weight:bold;font-size:8.2px">PSR distinct pow…</div>
<div class="a row" style="left:578.5px;top:643px;color:#111;height:6px;overflow:hidden;font-weight:bold;font-size:8.2px">PSR critical pow…</div>
<div class="a row" style="left:659.5px;top:609px;color:#989898">disappearing</div>
<div class="a row" style="left:659.5px;top:627px;color:#111;font-weight:bold;font-size:8.2px">disappearing</div>
<div class="a row" style="left:659.5px;top:643px;color:#111;height:6px;overflow:hidden;font-weight:bold;font-size:8.2px">appearing</div>
<div class="a row" style="left:740.5px;top:609px;color:#989898">f = 00.15 Hz</div>
<div class="a row" style="left:740.5px;top:627px;color:#111;font-weight:bold;font-size:8.2px">f = 00.06 Hz</div>
<div class="a row" style="left:740.5px;top:643px;color:#111;height:6px;overflow:hidden;font-weight:bold;font-size:8.2px">f = 00.06 Hz</div>
<div class="a" style="left:250px;top:623px;width:736px;height:2px;background:#1a1a1a"></div>
<div class="a" style="left:250px;top:641px;width:736px;height:1px;background:#e4e4e4"></div>
<div class="a sb" style="left:986px;top:570px;width:14px;height:79px;background:#c6c6c6"></div>
<div class="a sbb" style="left:986px;top:570px;width:14px;height:14px"><svg class="a" style="left:2px;top:4px" width="8" height="5"><path d="M0.5 4.5L4 1L7.5 4.5" stroke="#111" stroke-width="1.5" fill="none"/></svg></div>
<div class="a sbb" style="left:986px;top:586px;width:14px;height:17px"><i class="a" style="left:3px;top:5px;width:6px;height:5px;background:repeating-linear-gradient(#555 0,#555 1px,transparent 1px,transparent 2px)"></i></div>
<div class="a sbb" style="left:986px;top:635px;width:14px;height:14px"><svg class="a" style="left:2px;top:4px" width="8" height="5"><path d="M0.5 0.5L4 4L7.5 0.5" stroke="#111" stroke-width="1.5" fill="none"/></svg></div>
<div class="a" style="left:1px;top:649px;width:999px;height:17px;background:#cdcdcd;border-top:1px solid #f4f4f4;border-bottom:2px solid #f4f4f4"><span class="a" style="left:8px;top:3px;font-size:9px">Ready</span></div>
<svg class="a" style="left:988px;top:654px" width="11" height="11"><g fill="#a8a8a8"><rect x="8" y="0" width="2" height="2"/><rect x="4" y="4" width="2" height="2"/><rect x="8" y="4" width="2" height="2"/><rect x="0" y="8" width="2" height="2"/><rect x="4" y="8" width="2" height="2"/><rect x="8" y="8" width="2" height="2"/></g></svg>
</body></html>
